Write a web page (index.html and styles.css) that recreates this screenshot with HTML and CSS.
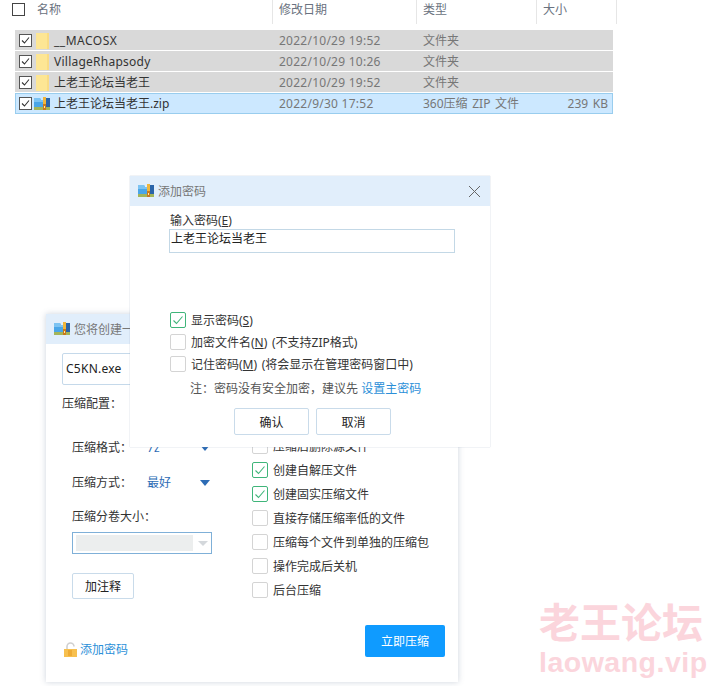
FILE: index.html
```html
<!DOCTYPE html>
<html>

<head>
    <title>添加密码</title>
    <link rel="stylesheet" href="styles.css">
</head>

<body>
    <svg class="defs" width="0" height="0">
        <symbol id="zip" viewBox="0 0 16 16">
            <path d="M0 2h6l1 2h3v10H0z" fill="#4aa6e8" />
            <path d="M0 2h6l1 2h3v2H0z" fill="#7cc3f2" />
            <path d="M10 2h6v12h-6z" fill="#2a64a8" />
            <path d="M0 11h16v3H0z" fill="#a3b55a" />
            <path d="M9 1h3v13H9z" fill="#f0b63c" />
            <path d="M9 8h3v6H9z" fill="#c9791c" />
            <path d="M10 10h1v2h-1z" fill="#ffe9a8" />
        </symbol>
        <symbol id="folder" viewBox="0 0 13 16">
            <path d="M0 0h12v16H0z" fill="#fde694" />
            <path d="M11 0h2v16h-2z" fill="#f9dc84" />
        </symbol>
        <symbol id="tick" viewBox="0 0 16 16">
            <path d="M3.500 8.500l3 3 6-7" fill="none" stroke="#3fb57a" stroke-width="1.100" />
        </symbol>
        <symbol id="blacktick" viewBox="0 0 11 11">
            <path d="M2 5.500l2.500 2.500 4.500-5.500" fill="none" stroke="#333" stroke-width="1.100" />
        </symbol>
    </svg>

    <div class="explorer">
        <div class="head-row">
            <div class="head-cell head-name"><span class="head-box"></span><span>名称</span></div>
            <div class="head-cell">修改日期</div>
            <div class="head-cell">类型</div>
            <div class="head-cell">大小</div>
        </div>
        <div class="file-list">
            <div class="file-row">
                <div class="file-name"><span class="row-box"><svg width="11" height="11"><use href="#blacktick" /></svg></span><svg class="file-icon" width="13" height="16"><use href="#folder" /></svg><span class="wider">__MACOSX</span></div>
                <div class="wide">2022/10/29 19:52</div>
                <div>文件夹</div>
                <div></div>
            </div>
            <div class="file-row">
                <div class="file-name"><span class="row-box"><svg width="11" height="11"><use href="#blacktick" /></svg></span><svg class="file-icon" width="13" height="16"><use href="#folder" /></svg><span class="wide">VillageRhapsody</span></div>
                <div class="wide">2022/10/29 10:26</div>
                <div>文件夹</div>
                <div></div>
            </div>
            <div class="file-row">
                <div class="file-name"><span class="row-box"><svg width="11" height="11"><use href="#blacktick" /></svg></span><svg class="file-icon" width="13" height="16"><use href="#folder" /></svg><span>上老王论坛当老王</span></div>
                <div class="wide">2022/10/29 19:52</div>
                <div>文件夹</div>
                <div></div>
            </div>
            <div class="file-row selected">
                <div class="file-name"><span class="row-box"><svg width="11" height="11"><use href="#blacktick" /></svg></span><svg class="file-icon zip-icon" width="16" height="16"><use href="#zip" /></svg><span>上老王论坛当老王.zip</span></div>
                <div class="wide">2022/9/30 17:52</div>
                <div class="spaced">360压缩 ZIP 文件</div>
                <div class="file-size spaced">239 KB</div>
            </div>
        </div>
    </div>

    <div class="dialog back-dialog">
        <div class="title-bar"><svg width="16" height="16"><use href="#zip" /></svg><span>您将创建一</span></div>
        <div class="back-body">
            <div class="back-left">
                <div class="exe-input wide">C5KN.exe</div>
                <div class="config-label">压缩配置：</div>
                <div class="option-row format-row"><span>压缩格式：</span><span class="option-value">7z</span><span class="arrow"></span></div>
                <div class="option-row method-row"><span>压缩方式：</span><span class="option-value">最好</span><span class="arrow"></span></div>
                <div class="volume-label">压缩分卷大小：</div>
                <div class="volume-combo"><span class="combo-fill"></span><span class="combo-arrow"></span></div>
                <button class="plain-btn note-btn">加注释</button>
                <div class="add-password">
                    <svg width="14" height="16" viewBox="0 0 14 16">
                        <path d="M3 8V4.500a3.500 3.500 0 0 1 7 0" fill="none" stroke="#d0d0d0" stroke-width="1.600" />
                        <path d="M0 7h13v8H0z" fill="#f7c04f" />
                        <path d="M4 8h4v6H4z" fill="#eeab35" />
                    </svg>
                    <a>添加密码</a>
                </div>
            </div>
            <div class="back-right">
                <div class="check-list">
                    <div class="check-item"><span class="check"></span><span>压缩后删除源文件</span></div>
                    <div class="check-item"><span class="check on"><svg width="16" height="16"><use href="#tick" /></svg></span><span>创建自解压文件</span></div>
                    <div class="check-item"><span class="check on"><svg width="16" height="16"><use href="#tick" /></svg></span><span>创建固实压缩文件</span></div>
                    <div class="check-item"><span class="check"></span><span>直接存储压缩率低的文件</span></div>
                    <div class="check-item"><span class="check"></span><span>压缩每个文件到单独的压缩包</span></div>
                    <div class="check-item"><span class="check"></span><span>操作完成后关机</span></div>
                    <div class="check-item"><span class="check"></span><span>后台压缩</span></div>
                </div>
                <button class="primary-btn">立即压缩</button>
            </div>
        </div>
    </div>

    <div class="dialog front-dialog">
        <div class="title-bar">
            <svg width="16" height="16"><use href="#zip" /></svg><span>添加密码</span>
            <svg class="close-icon" width="13" height="13" viewBox="0 0 13 13">
                <path d="M1 1l11 11M12 1L1 12" stroke="#666" stroke-width="1" fill="none" />
            </svg>
        </div>
        <div class="front-body">
            <div class="pass-label">输入密码(<u>E</u>)</div>
            <div class="pass-input">上老王论坛当老王</div>
            <div class="front-checks">
                <div class="front-check"><span class="check on"><svg width="16" height="16"><use href="#tick" /></svg></span><span>显示密码(<u>S</u>)</span></div>
                <div class="front-check"><span class="check"></span><span>加密文件名(<u>N</u>) (不支持ZIP格式)</span></div>
                <div class="front-check"><span class="check"></span><span>记住密码(<u>M</u>) (将会显示在管理密码窗口中)</span></div>
            </div>
            <div class="pass-note">注：密码没有安全加密，建议先 <a>设置主密码</a></div>
            <div class="front-btns">
                <button class="plain-btn">确认</button>
                <button class="plain-btn">取消</button>
            </div>
        </div>
    </div>

    <div class="watermark">
        <div class="mark-cn">老王论坛</div>
        <div class="mark-en">laowang.vip</div>
    </div>
</body>

</html>
```

FILE: styles.css
```css
body {
    margin: 0;
    width: 726px;
    height: 686px;
    overflow: hidden;
    position: relative;
    background-color: white;
    font-family: "Noto Sans", "Noto Sans CJK SC", sans-serif;
    font-size: 12px;
    color: #333;
}

.defs {
    position: absolute;
}

button {
    font-family: inherit;
    font-size: 12px;
    color: #222;
    cursor: pointer;
}

a {
    color: #2b8fd8;
}

.wide {
    letter-spacing: 0.25px;
}

.wider {
    letter-spacing: 0.5px;
}

.spaced {
    word-spacing: 1.500px;
}

/* file list */
.explorer {
    position: absolute;
    left: 0;
    top: 0;
    width: 726px;
}

.head-row {
    display: grid;
    grid-template-columns: 273px 144px 120px 80px;
    height: 24px;
    color: #6a7280;
}

.head-cell {
    display: flex;
    align-items: center;
    gap: 12px;
    padding: 0 0 5px 6px;
    border-right: 1px solid #e6e6e6;
    line-height: 18px;
}

.head-name {
    padding-left: 12px;
}

.head-box {
    width: 11px;
    height: 11px;
    border: 1px solid #444;
}

.file-list {
    margin: 6px 0 0 15px;
    width: 598px;
}

.file-row {
    display: grid;
    grid-template-columns: 264px 144px 120px 70px;
    height: 19px;
    padding-top: 1px;
    margin-bottom: 1px;
    background-color: #d9d9d9;
    align-items: center;
    color: #777;
    line-height: 19px;
}

.file-row.selected {
    height: 19px;
    padding-top: 0;
    background-color: #cce8ff;
    border: 1px solid #99cdee;
    margin: 0;
    grid-template-columns: 263px 144px 120px 69px;
}

.file-name {
    display: flex;
    align-items: center;
    color: #333;
    padding-left: 4px;
}

.selected .file-name {
    padding-left: 3px;
}

.row-box {
    width: 11px;
    height: 11px;
    border: 1px solid #555;
    background-color: white;
    display: flex;
    flex-shrink: 0;
}

.file-icon {
    margin: 0 5px 0 4px;
}

.zip-icon {
    margin: 0 4px 0 2px;
}

.file-size {
    text-align: right;
    padding-right: 4px;
}

/* dialogs */
.dialog {
    position: absolute;
    background-color: white;
}

.back-dialog {
    left: 46px;
    top: 314px;
    width: 412px;
    height: 368px;
    box-shadow: 0 0 6px rgba(90, 110, 140, 0.3);
}

.front-dialog {
    left: 130px;
    top: 176px;
    width: 360px;
    height: 271px;
    box-shadow: 0 0 1px rgba(120, 140, 170, 0.6);
}

.title-bar {
    display: flex;
    align-items: center;
    gap: 4px;
    height: 30px;
    padding-left: 8px;
    background-color: #e1eefb;
    color: #777;
}

.close-icon {
    margin-left: auto;
    margin-right: 9px;
}

/* back dialog */
.back-body {
    display: flex;
    height: 338px;
}

.back-left {
    width: 206px;
    padding-left: 16px;
    box-sizing: border-box;
}

.exe-input {
    width: 120px;
    height: 30px;
    margin-top: 9px;
    padding-left: 3px;
    border: 1px solid #c5d9ea;
    border-radius: 2px;
    line-height: 30px;
    color: #222;
}

.config-label {
    margin-top: 10px;
    line-height: 18px;
}

.option-row {
    display: flex;
    align-items: center;
    margin-left: 10px;
    line-height: 18px;
}

.format-row {
    margin-top: 26px;
}

.method-row {
    margin-top: 17px;
}

.option-value {
    width: 53px;
    margin-left: 15px;
    color: #2d6cb5;
}

.arrow {
    border-left: 5px solid transparent;
    border-right: 5px solid transparent;
    border-top: 6px solid #2d6cb5;
}

.volume-label {
    margin: 16px 0 0 10px;
    line-height: 18px;
}

.volume-combo {
    display: flex;
    align-items: center;
    height: 20px;
    margin: 6px 0 0 10px;
    padding: 0 3px;
    box-sizing: content-box;
    border: 1px solid #7fb0d8;
    width: 132px;
}

.combo-fill {
    width: 117px;
    height: 16px;
    background-color: #eceeee;
}

.combo-arrow {
    margin-left: 5px;
    border-left: 5px solid transparent;
    border-right: 5px solid transparent;
    border-top: 5px solid #d4d8dc;
}

.plain-btn {
    background-color: white;
    border: 1px solid #c9dbea;
    border-radius: 2px;
    padding: 0;
}

.note-btn {
    display: block;
    width: 62px;
    height: 26px;
    margin: 19px 0 0 10px;
}

.add-password {
    display: flex;
    align-items: center;
    gap: 2px;
    margin: 41px 0 0 2px;
    line-height: 18px;
}

.add-password a {
    padding-top: 1px;
}

.back-right {
    flex: 1;
    display: flex;
    flex-direction: column;
    padding-top: 94px;
}

.check-list {
    display: flex;
    flex-direction: column;
    gap: 8px;
}

.check-item {
    display: flex;
    align-items: center;
    gap: 5px;
    height: 16px;
}

.check {
    display: flex;
    width: 14px;
    height: 14px;
    border: 1px solid #d4d4d4;
    border-radius: 2px;
    flex-shrink: 0;
    background-color: white;
}

.check svg {
    margin: -1px;
}

.check.on {
    border-color: #3fb57a;
}

.primary-btn {
    align-self: flex-end;
    width: 80px;
    height: 32px;
    margin: 27px 13px 0 0;
    background-color: #0f9bff;
    border: none;
    border-radius: 2px;
    color: white;
}

/* front dialog */
.front-body {
    padding: 6px 0 0 39px;
}

.pass-label {
    padding-left: 1px;
    line-height: 17px;
}

.pass-input {
    height: 22px;
    border: 1px solid #c3d8e6;
    padding-left: 1px;
    box-sizing: content-box;
    width: 283px;
    line-height: 18px;
    color: #222;
}

.front-checks {
    display: flex;
    flex-direction: column;
    gap: 6px;
    margin: 59px 0 0 1px;
}

.front-check {
    display: flex;
    align-items: center;
    gap: 5px;
    height: 16px;
    word-spacing: 1.500px;
}

.pass-note {
    margin: 8px 0 0 21px;
    line-height: 18px;
    color: #555;
}

.front-btns {
    display: flex;
    gap: 7px;
    margin: 10px 0 0 65px;
}

.front-btns .plain-btn {
    width: 75px;
    height: 27px;
}

/* watermark */
.watermark {
    position: absolute;
    left: 539px;
    top: 597px;
    width: 175px;
    color: #fbd5dc;
    font-weight: 700;
}

.mark-cn {
    font-family: "Noto Sans CJK SC", sans-serif;
    font-size: 41px;
    line-height: 46px;
}

.mark-en {
    font-family: "Liberation Sans", sans-serif;
    font-size: 28.500px;
    line-height: 26px;
    margin-top: 6px;
    letter-spacing: 0.5px;
}
```
